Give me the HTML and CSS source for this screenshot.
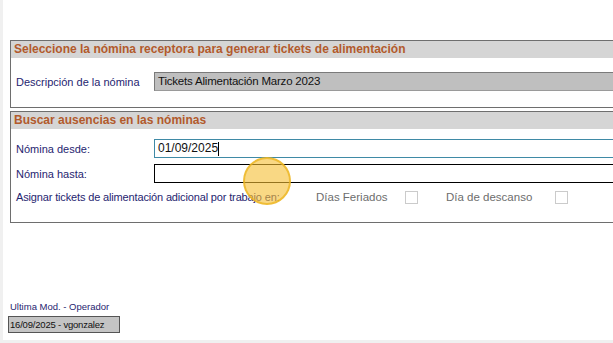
FILE: index.html
```html
<!DOCTYPE html>
<html lang="es">
<head>
<meta charset="utf-8">
<link rel="stylesheet" href="styles.css">
</head>
<body>
<div class="frame">
  <div class="content">
    <section class="panel panel-one">
      <div class="panel-head">Seleccione la nómina receptora para generar tickets de alimentación</div>
      <div class="panel-body body-one">
        <div class="row">
          <span class="label lbl-desc">Descripción de la nómina</span>
          <div class="field field-ro">Tickets Alimentación Marzo 2023</div>
        </div>
      </div>
    </section>
    <section class="panel panel-two">
      <div class="panel-head">Buscar ausencias en las nóminas</div>
      <div class="panel-body body-two">
        <div class="row row-desde">
          <span class="label lbl-wide">Nómina desde:</span>
          <div class="field field-focus">01/09/2025<span class="caret"></span></div>
        </div>
        <div class="row row-hasta">
          <span class="label lbl-wide">Nómina hasta:</span>
          <div class="field field-plain"></div>
        </div>
        <div class="row row-check">
          <span class="label lbl-assign">Asignar tickets de alimentación adicional por trabajo en:</span>
          <span class="check-label cl-1">Días Feriados</span>
          <span class="checkbox cb-1"></span>
          <span class="check-label cl-2">Día de descanso</span>
          <span class="checkbox"></span>
        </div>
      </div>
    </section>
  </div>
  <footer class="footer">
    <div class="foot-label">Ultima Mod. - Operador</div>
    <div class="foot-box">16/09/2025 - vgonzalez</div>
  </footer>
  <div class="cursor-dot"></div>
</div>
</body>
</html>
```
FILE: styles.css
```css
* { box-sizing: border-box; }
html, body { margin: 0; padding: 0; }
body {
  width: 613px;
  height: 343px;
  overflow: hidden;
  background: #f0f0f0;
  font-family: "Liberation Sans", Arial, sans-serif;
}
.frame {
  position: relative;
  margin-left: 3px;
  width: 610px;
  height: 340px;
  background: #ffffff;
  display: flex;
  flex-direction: column;
}
.content {
  padding: 40px 0 0 7px;
  display: flex;
  flex-direction: column;
  gap: 3px;
}
.panel {
  border: 1px solid #6e6e6e;
  border-right: none;
  width: 640px;
}
.panel-head {
  height: 17px;
  background: #d5d5d5;
  color: #b25a2c;
  font-weight: bold;
  font-size: 12px;
  line-height: 16px;
  padding-left: 3px;
}
.body-one { height: 49px; padding-top: 14px; }
.body-two { height: 93px; padding-top: 10px; }
.row {
  display: flex;
  align-items: center;
}
.label {
  color: #1f2570;
  font-size: 11px;
  padding-left: 5px;
}
.lbl-desc { width: 143px; }
.lbl-wide { width: 143px; }
.field {
  height: 19px;
  flex: 1;
  font-size: 12px;
  line-height: 17px;
  padding-left: 3px;
  color: #111;
}
.field-ro {
  background: #bfbfbf;
  border: 1px solid #7a7a7a;
  border-bottom-color: #9a9a9a;
  font-size: 11.5px;
  letter-spacing: -0.2px;
}
.field-focus {
  border: 1px solid #3f8aa6;
  display: flex;
  align-items: center;
}
.caret {
  display: inline-block;
  width: 1px;
  height: 14px;
  background: #000;
}
.field-plain { border: 1px solid #000; }
.row-hasta { margin-top: 6px; }
.row-check { margin-top: 6px; height: 16px; }
.lbl-assign { width: 305px; letter-spacing: -0.15px; }
.check-label {
  color: #6d6d6d;
  font-size: 11.5px;
}
.cl-1 { width: 89px; }
.cl-2 { width: 109px; margin-left: 28px; }
.checkbox {
  width: 13px;
  height: 13px;
  border: 1px solid #cbcbcb;
  background: #fff;
}
.footer {
  margin-top: auto;
  padding: 0 0 7px 5px;
}
.foot-label {
  color: #1f2570;
  font-size: 9.5px;
  margin-bottom: 4px;
  padding-left: 2px;
}
.foot-box {
  width: 112px;
  height: 17px;
  background: #c4c4c4;
  border: 1px solid #555;
  font-size: 9.5px;
  letter-spacing: -0.2px;
  line-height: 15px;
  padding-left: 1px;
  color: #111;
  white-space: nowrap;
  overflow: hidden;
}
.cursor-dot {
  position: absolute;
  left: 240px;
  top: 157px;
  width: 48px;
  height: 48px;
  border-radius: 50%;
  background: rgba(245, 190, 50, 0.6);
  border: 2px solid rgba(235, 180, 30, 0.75);
}
```
